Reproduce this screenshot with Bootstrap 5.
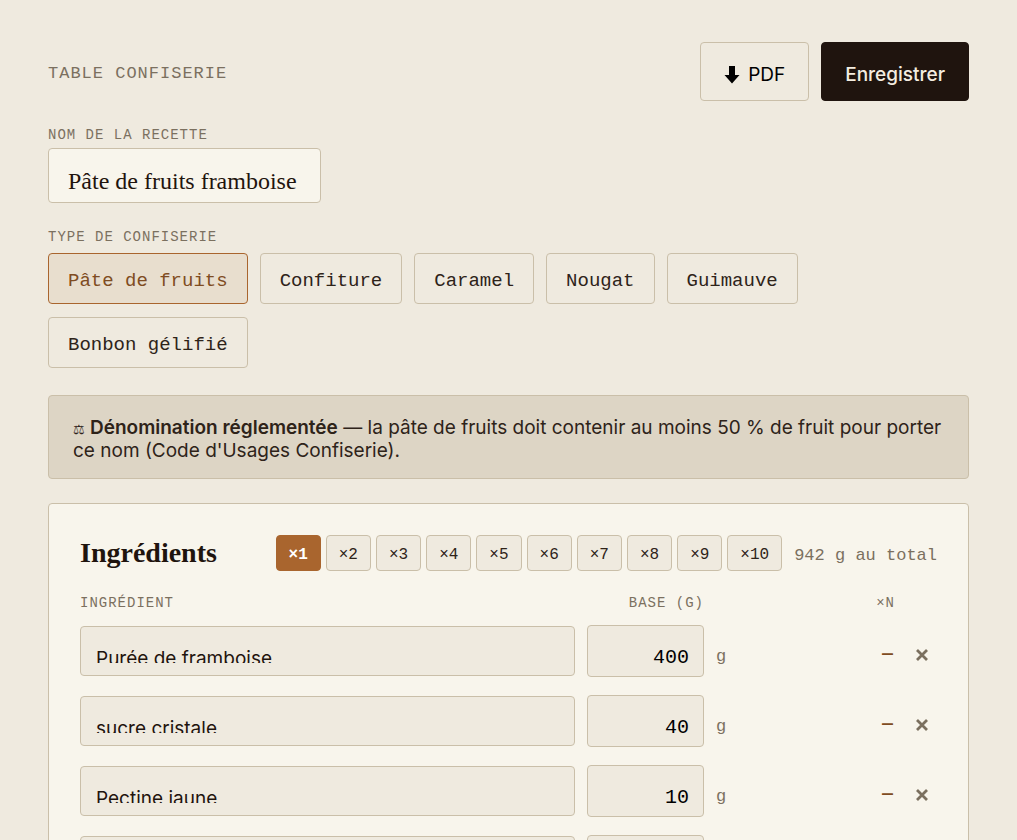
<!DOCTYPE html>
<html lang="fr">
<head>
<meta charset="utf-8">
<meta name="viewport" content="width=device-width, initial-scale=1">
<title>Table confiserie</title>
<link href="https://cdn.jsdelivr.net/npm/bootstrap@5.3.0/dist/css/bootstrap.min.css" rel="stylesheet">
<style>
  :root {
    --paper: #efeadf; --sheet: #f8f5ec; --sand: #ddd5c5; --line: #cabfa9;
    --ink: #1f140e; --soft: #2e2319; --muted: #7b705f; --accent: #a9652e; --accent-dark: #7f4c22;
    --mono: "Liberation Mono", monospace;
    --serif: "Liberation Serif", serif;
  }
  body { background: var(--paper); color: var(--ink); font-family: Inter, sans-serif; font-size: 19px; }
  .page { padding: 42px 48px 0; }
  .brand { font-family: var(--mono); font-size: 17px; letter-spacing: 1px; color: var(--muted); line-height: 24px; margin: 4px 0 0; }
  .caption { font-family: var(--mono); font-size: 14px; letter-spacing: 1px; line-height: 20px; color: var(--muted); font-weight: 400; text-transform: uppercase; }
  .bar { gap: 12px; }
  .btn { --bs-btn-border-radius: 4px; --bs-btn-border-color: var(--line); --bs-btn-color: var(--soft); --bs-btn-hover-color: var(--ink); --bs-btn-hover-border-color: var(--accent); }
  .btn-action { font-size: 19px; line-height: 24px; padding: 20px 23px 13px; }
  .btn-pdf { --bs-btn-color: #000; }
  .btn-save { --bs-btn-bg: var(--ink); --bs-btn-color: #f4ede0; --bs-btn-border-color: var(--ink); --bs-btn-hover-bg: #3a281d; --bs-btn-hover-color: #fff; font-weight: 500; }
  .field { border: 1px solid var(--line); border-radius: 4px; color: var(--ink); }
  .field:focus { border-color: var(--accent); outline: 0; }
  .recipe-label { margin-bottom: 3px; }
  .recipe-name { font-family: var(--serif); font-size: 24px; line-height: 24px; width: 273px; max-width: 100%; height: 55px; padding: 20px 19px 8px; background: var(--sheet); }
  .kind-title { margin-bottom: 6px; }
  .kinds { gap: 13px 12px; }
  .btn-kind { font-family: var(--mono); font-size: 19px; line-height: 24px; padding: 15px 19px 10px; }
  .btn-kind.active { --bs-btn-active-bg: #e8dece; --bs-btn-active-color: var(--accent-dark); --bs-btn-active-border-color: var(--accent); }
  .notice { background: var(--sand); border: 1px solid var(--line); border-radius: 4px; color: var(--soft); line-height: 23px; padding: 20px 24px 16px; margin: 27px 0 24px; }
  .notice strong { font-weight: 600; }
  .scales { font-family: "DejaVu Sans", sans-serif; font-size: 13px; line-height: 0; }
  .sheet { background: var(--sheet); border-color: var(--line); border-radius: 4px; padding: 31px 31px 32px; }
  .sheet-title { font-family: var(--serif); font-weight: 700; font-size: 28px; line-height: 32px; margin: 0; }
  .btn-times { font-family: var(--mono); font-size: 16px; line-height: 20px; padding: 9px 12px 5px; --bs-btn-bg: var(--paper); }
  .btn-times.active { --bs-btn-active-bg: var(--accent); --bs-btn-active-color: #fff; --bs-btn-active-border-color: var(--accent); font-weight: 700; }
  .factors { gap: 5px; }
  .total { font-family: var(--mono); font-size: 17px; line-height: 24px; color: var(--muted); padding-top: 5px; }
  .ingredients { width: 100%; table-layout: fixed; margin-top: 22px; }
  .ingredients th, .ingredients td { padding: 0; }
  .ingredients thead th { padding-bottom: 3px; }
  .ingredients tbody td { height: 70px; }
  .col-base { width: 117px; } .col-unit { width: 48px; } .col-qty { width: 143px; } .col-del { width: 42px; }
  .name-box { height: 50px; margin-right: 12px; background: var(--paper); }
  .name-box:focus-within { border-color: var(--accent); }
  .name-input { height: 48px; padding: 14px 15px 0; font-size: 19px; line-height: 24px; color: var(--ink); clip-path: inset(0 0 12px); outline: 0; }
  .base-input { height: 52px; font-family: var(--mono); font-size: 20px; line-height: 24px; padding: 19px 14px 7px; background: var(--paper); color: #000; }
  .ingredients .unit { font-family: var(--mono); font-size: 17px; color: var(--muted); padding: 12px 0 0 12px; }
  .ingredients .qty { font-size: 22px; color: var(--accent-dark); padding: 4px 2px 0 0; }
  .btn-del { --bs-btn-padding-x: 0; --bs-btn-padding-y: 0; --bs-btn-color: var(--muted); border: 0; line-height: 1; margin: 4px 8px 0 0; }
</style>
</head>
<body>
<main class="page">
  <header class="d-flex align-items-center justify-content-between">
    <h1 class="brand fw-normal">TABLE CONFISERIE</h1>
    <div class="bar d-flex">
      <button type="button" class="btn btn-action btn-pdf d-flex align-items-center gap-2">
        <svg width="16" height="20" viewBox="0 0 16 20" aria-hidden="true"><path d="M5 1h6v9h4.500L8 18.500.500 10H5z" fill="#000"/></svg>PDF</button>
      <button type="button" class="btn btn-action btn-save">Enregistrer</button>
    </div>
  </header>

  <div class="mt-4">
    <label class="caption recipe-label d-block" for="recette">Nom de la recette</label>
    <input id="recette" class="field recipe-name d-block" type="text" value="Pâte de fruits framboise">
  </div>

  <section class="mt-4" aria-labelledby="type-titre">
    <h2 id="type-titre" class="caption kind-title">Type de confiserie</h2>
    <div class="kinds d-flex flex-wrap">
      <button type="button" class="btn btn-kind active" aria-pressed="true">Pâte de fruits</button>
      <button type="button" class="btn btn-kind">Confiture</button>
      <button type="button" class="btn btn-kind">Caramel</button>
      <button type="button" class="btn btn-kind">Nougat</button>
      <button type="button" class="btn btn-kind">Guimauve</button>
      <button type="button" class="btn btn-kind">Bonbon gélifié</button>
    </div>
  </section>

  <p class="notice"><span class="scales">⚖&#xFE0E;</span> <strong>Dénomination réglementée</strong> — la pâte de fruits doit contenir au moins 50 % de fruit pour porter ce nom (Code d'Usages Confiserie).</p>

  <section class="sheet card">
    <div class="d-flex flex-wrap align-items-center justify-content-between">
      <h2 class="sheet-title">Ingrédients</h2>
      <div class="bar d-flex flex-wrap align-items-center">
        <div class="factors d-flex flex-wrap" role="group" aria-label="Multiplicateur">
          <button type="button" class="btn btn-times active" aria-pressed="true">×1</button>
          <button type="button" class="btn btn-times">×2</button>
          <button type="button" class="btn btn-times">×3</button>
          <button type="button" class="btn btn-times">×4</button>
          <button type="button" class="btn btn-times">×5</button>
          <button type="button" class="btn btn-times">×6</button>
          <button type="button" class="btn btn-times">×7</button>
          <button type="button" class="btn btn-times">×8</button>
          <button type="button" class="btn btn-times">×9</button>
          <button type="button" class="btn btn-times">×10</button>
        </div>
        <span class="total">942 g au total</span>
      </div>
    </div>

    <table class="ingredients">
      <colgroup><col><col class="col-base"><col class="col-unit"><col class="col-qty"><col class="col-del"></colgroup>
      <thead>
        <tr><th class="caption" scope="col">Ingrédient</th><th class="caption text-end" scope="col">Base (g)</th><td></td><th class="caption text-end" scope="col">×N</th><td></td></tr>
      </thead>
      <tbody>
        <tr>
          <td><div class="field name-box"><input class="name-input w-100 border-0 bg-transparent" type="text" aria-label="Ingrédient 1" value="Purée de framboise"></div></td>
          <td><input class="field base-input w-100 text-end d-block" type="text" inputmode="decimal" aria-label="Base 1" value="400"></td>
          <td class="unit">g</td><td class="qty text-end">–</td>
          <td class="text-end"><button type="button" class="btn btn-del" aria-label="Supprimer"><svg width="14" height="14" viewBox="0 0 14 14" fill="none" stroke="currentColor" stroke-width="2.800"><path d="M2 2l10 10M12 2L2 12"/></svg></button></td>
        </tr>
        <tr>
          <td><div class="field name-box"><input class="name-input w-100 border-0 bg-transparent" type="text" aria-label="Ingrédient 2" value="sucre cristale"></div></td>
          <td><input class="field base-input w-100 text-end d-block" type="text" inputmode="decimal" aria-label="Base 2" value="40"></td>
          <td class="unit">g</td><td class="qty text-end">–</td>
          <td class="text-end"><button type="button" class="btn btn-del" aria-label="Supprimer"><svg width="14" height="14" viewBox="0 0 14 14" fill="none" stroke="currentColor" stroke-width="2.800"><path d="M2 2l10 10M12 2L2 12"/></svg></button></td>
        </tr>
        <tr>
          <td><div class="field name-box"><input class="name-input w-100 border-0 bg-transparent" type="text" aria-label="Ingrédient 3" value="Pectine jaune"></div></td>
          <td><input class="field base-input w-100 text-end d-block" type="text" inputmode="decimal" aria-label="Base 3" value="10"></td>
          <td class="unit">g</td><td class="qty text-end">–</td>
          <td class="text-end"><button type="button" class="btn btn-del" aria-label="Supprimer"><svg width="14" height="14" viewBox="0 0 14 14" fill="none" stroke="currentColor" stroke-width="2.800"><path d="M2 2l10 10M12 2L2 12"/></svg></button></td>
        </tr>
        <tr>
          <td><div class="field name-box"><input class="name-input w-100 border-0 bg-transparent" type="text" aria-label="Ingrédient 4"></div></td>
          <td><input class="field base-input w-100 text-end d-block" type="text" inputmode="decimal" aria-label="Base 4"></td>
          <td></td><td></td>
          <td></td>
        </tr>
      </tbody>
    </table>
  </section>
</main>
<script src="https://cdn.jsdelivr.net/npm/bootstrap@5.3.0/dist/js/bootstrap.bundle.min.js"></script>
</body>
</html>
